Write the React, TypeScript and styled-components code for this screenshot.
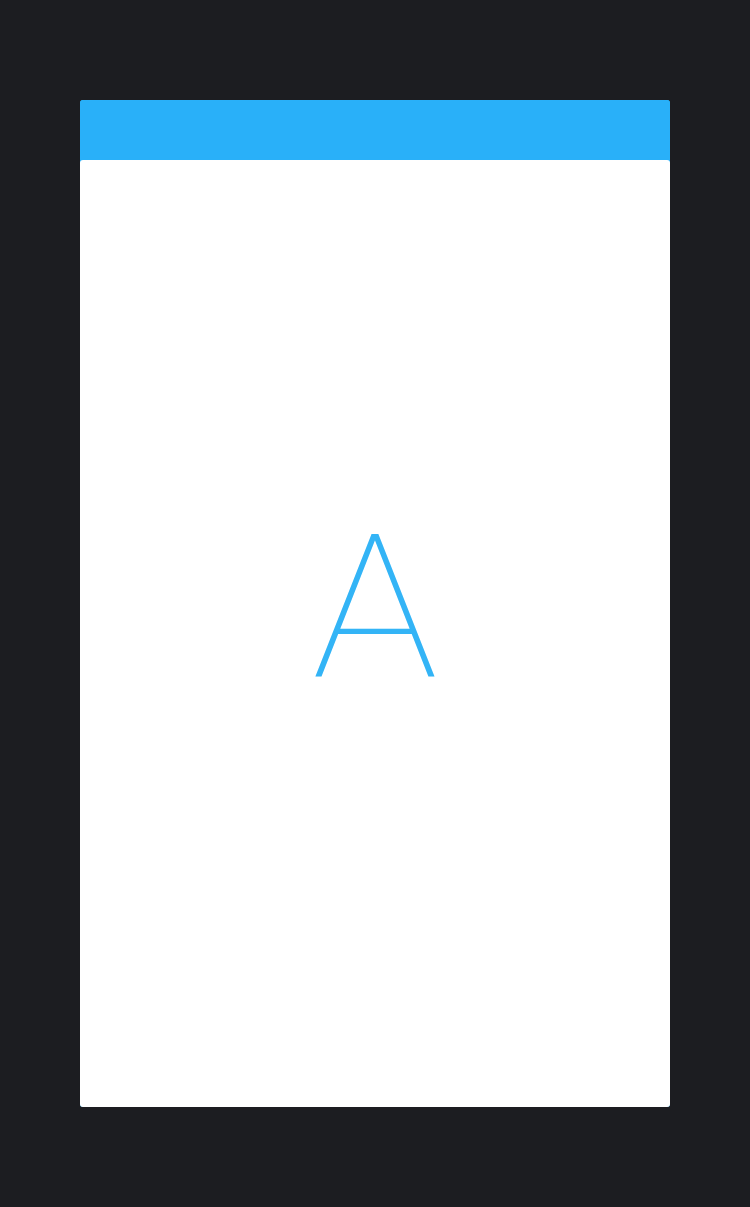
import React from "react";
import styled, { createGlobalStyle } from "styled-components";

const Global = createGlobalStyle`
  html, body { margin: 0; padding: 0; background: #1c1d21; }
  body { font-family: Roboto, "Liberation Sans", sans-serif; }
`;

const Page = styled.div`
  display: flex;
  justify-content: center;
  padding: 100px 0 100px;
  min-height: 1207px;
  box-sizing: border-box;
`;

const Card = styled.div`
  width: 590px;
  height: 1007px;
  display: flex;
  flex-direction: column;
  border-radius: 3px;
  overflow: hidden;
  background: #29b0f9;
`;

const Header = styled.div`
  height: 60px;
  flex: none;
  background: #29b0f9;
`;

const Body = styled.div`
  flex: 1;
  background: #ffffff;
  border-radius: 3px 3px 0 0;
  display: flex;
  align-items: center;
  justify-content: center;
  padding-bottom: 50px;
`;

const Letter = styled.div`
  font-family: Roboto, "Liberation Sans", sans-serif;
  font-weight: 100;
  font-size: 201px;
  line-height: 1;
  color: #33b4f6;
  transform: scaleX(1.05);
`;

export default function App() {
  return (
    <>
      <Global />
      <Page>
        <Card>
          <Header />
          <Body>
            <Letter>A</Letter>
          </Body>
        </Card>
      </Page>
    </>
  );
}
